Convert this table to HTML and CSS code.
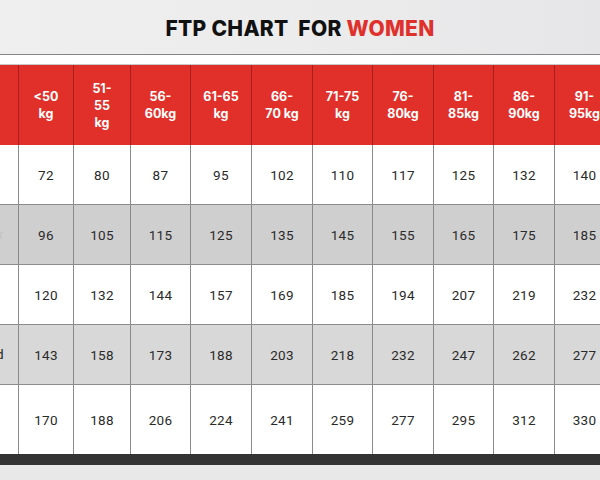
FILE: index.html
```html
<!DOCTYPE html>
<html lang="en">
<head>
<meta charset="utf-8">
<title>FTP Chart for Women</title>
<link rel="stylesheet" href="styles.css">
</head>
<body>
<div class="page">
  <header class="top">
    <h1 class="title">FTP CHART&nbsp; FOR <span class="accent">WOMEN</span></h1>
  </header>
  <div class="spacer"></div>
  <div class="table">
    <div class="row head">
      <div class="cell label"></div>
      <div class="cell">&lt;50<br>kg</div>
      <div class="cell">51-<br>55<br>kg</div>
      <div class="cell">56-<br>60kg</div>
      <div class="cell">61-65<br>kg</div>
      <div class="cell">66-<br>70 kg</div>
      <div class="cell">71-75<br>kg</div>
      <div class="cell">76-<br>80kg</div>
      <div class="cell">81-<br>85kg</div>
      <div class="cell">86-<br>90kg</div>
      <div class="cell">91-<br>95kg</div>
    </div>
    <div class="row white">
      <div class="cell label"><span></span></div>
      <div class="cell">72</div><div class="cell">80</div><div class="cell">87</div><div class="cell">95</div><div class="cell">102</div>
      <div class="cell">110</div><div class="cell">117</div><div class="cell">125</div><div class="cell">132</div><div class="cell">140</div>
    </div>
    <div class="row grey">
      <div class="cell label"><span>Fair</span></div>
      <div class="cell">96</div><div class="cell">105</div><div class="cell">115</div><div class="cell">125</div><div class="cell">135</div>
      <div class="cell">145</div><div class="cell">155</div><div class="cell">165</div><div class="cell">175</div><div class="cell">185</div>
    </div>
    <div class="row white">
      <div class="cell label"><span></span></div>
      <div class="cell">120</div><div class="cell">132</div><div class="cell">144</div><div class="cell">157</div><div class="cell">169</div>
      <div class="cell">185</div><div class="cell">194</div><div class="cell">207</div><div class="cell">219</div><div class="cell">232</div>
    </div>
    <div class="row grey light">
      <div class="cell label"><span class="strong">Good</span></div>
      <div class="cell">143</div><div class="cell">158</div><div class="cell">173</div><div class="cell">188</div><div class="cell">203</div>
      <div class="cell">218</div><div class="cell">232</div><div class="cell">247</div><div class="cell">262</div><div class="cell">277</div>
    </div>
    <div class="row white last">
      <div class="cell label"><span></span></div>
      <div class="cell">170</div><div class="cell">188</div><div class="cell">206</div><div class="cell">224</div><div class="cell">241</div>
      <div class="cell">259</div><div class="cell">277</div><div class="cell">295</div><div class="cell">312</div><div class="cell">330</div>
    </div>
  </div>
  <div class="bar"></div>
  <div class="foot"></div>
</div>
</body>
</html>
```

FILE: styles.css
```css
html, body {
  margin: 0;
  padding: 0;
}
body {
  width: 600px;
  height: 480px;
  overflow: hidden;
  background: #e7e7e8;
  font-family: "Roboto", "Liberation Sans", sans-serif;
}
.page {
  width: 614px;
}
.top {
  height: 54px;
  width: 600px;
  display: flex;
  align-items: center;
  justify-content: center;
  background: linear-gradient(90deg, #efeff0 0%, #ebebec 60%, #e6e6e8 100%);
  border-bottom: 1px solid #858585;
}
.title {
  margin: 0;
  margin-top: 3px;
  font-family: "Inter", "Liberation Sans", sans-serif;
  font-weight: 800;
  font-size: 21px;
  letter-spacing: 0.3px;
  color: #111;
}
.accent {
  color: #e0302b;
}
.spacer {
  height: 9px;
  background: #fff;
  border-bottom: 1px solid #c9c9c9;
}
.table {
  display: flex;
  flex-direction: column;
}
.row {
  display: grid;
  grid-template-columns: 18px 55px 57px 60px 61px 61px 60px 61px 60px 61px 60px;
  height: 60px;
  box-sizing: border-box;
  border-bottom: 1px solid #8c8c8c;
}
.cell {
  display: flex;
  align-items: center;
  justify-content: center;
  text-align: center;
  border-left: 1px solid #8a8a8a;
  font-size: 13.5px;
  letter-spacing: 0.3px;
  color: #2a2a2a;
}
.cell.label {
  border-left: none;
  justify-content: flex-end;
  overflow: hidden;
  padding-right: 14px;
}
.cell.label span {
  white-space: nowrap;
  color: #c4c4c4;
  font-size: 13px;
}
.cell.label span.strong {
  color: #222;
}
.head {
  height: 80px;
  background: #e1302a;
  border-bottom: none;
}
.head .cell {
  border-left: 1px solid #a8201d;
  color: #fff;
  font-family: "Inter", "Liberation Sans", sans-serif;
  font-weight: 700;
  font-size: 12.5px;
  letter-spacing: 0;
  line-height: 17px;
}
.head .cell.label {
  border-left: none;
}
.white {
  background: #fff;
}
.grey {
  background: #d0cfd0;
}
.grey.light {
  background: #d8d8d8;
}
.last {
  height: 69px;
  border-bottom: none;
}
.bar {
  height: 11px;
  background: #333333;
}
.foot {
  height: 20px;
  background: #e8e8e9;
}
```
